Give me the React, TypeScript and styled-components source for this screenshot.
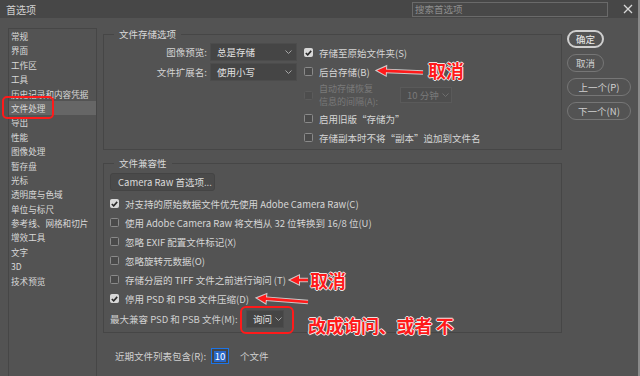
import React from "react";
import styled, { createGlobalStyle } from "styled-components";

const RED = "#ff1a1a";

const GlobalStyle = createGlobalStyle`
  html, body {
    margin: 0;
    padding: 0;
    background: #535353;
  }
  body {
    font-family: "Noto Sans CJK SC", "Noto Sans", sans-serif;
    color: #d6d6d6;
  }
  * {
    box-sizing: border-box;
  }
`;

const Window = styled.div`
  position: relative;
  width: 640px;
  height: 376px;
  overflow: hidden;
  background: #535353;
  border-right: 2px solid #8a8a8a;
`;

const TitleBar = styled.div`
  height: 18px;
  display: flex;
  align-items: center;
  padding: 0 5px 0 6px;
  background: #474747;
`;

const Title = styled.div`
  font-size: 10px;
  color: #d2d2d2;
`;

const Search = styled.div`
  margin-left: auto;
  width: 196px;
  height: 15px;
  border: 1px solid #6a6a6a;
  background: #484848;
  font-size: 9.5px;
  line-height: 13px;
  color: #8e8e8e;
  padding-left: 2px;
`;

const Close = styled.div`
  margin-left: 15px;
  width: 10px;
  height: 10px;
  display: flex;
`;

const Body = styled.div`
  display: flex;
  align-items: flex-start;
  padding: 10px 0 0 8px;
`;

const Sidebar = styled.div`
  width: 89px;
  height: 360px;
  border: 1px solid #464646;
  border-bottom: none;
`;

const NavItem = styled.div<{ $active?: boolean }>`
  height: 14.4px;
  line-height: 14.4px;
  padding-left: 2px;
  font-size: 8.6px;
  white-space: nowrap;
  color: #d8d8d8;
  background: ${(p) => (p.$active ? "#666666" : "transparent")};
`;

const Main = styled.div`
  width: 459px;
  margin-left: 6px;
  display: flex;
  flex-direction: column;
`;

const Group = styled.fieldset<{ $gap?: number }>`
  margin: ${(p) => p.$gap ?? 0}px 0 0 0;
  padding: 0 0 2px 6px;
  border: 1px solid #464646;
  min-width: 0;
`;

const Legend = styled.legend`
  margin-left: 4px;
  padding: 0 5px;
  font-size: 9.5px;
  line-height: 12px;
  color: #d8d8d8;
`;

const StoreContent = styled.div`
  display: flex;
  align-items: flex-start;
  margin-top: 3px;
`;

const SelectGrid = styled.div`
  width: 187px;
  display: grid;
  grid-template-columns: 1fr 87px;
  column-gap: 3px;
  row-gap: 2px;
  align-items: center;
`;

const FieldLabel = styled.div`
  text-align: right;
  font-size: 9.5px;
  color: #d4d4d4;
  white-space: nowrap;
`;

const SelectBox = styled.div<{ $w: number; $h?: number; $disabled?: boolean }>`
  width: ${(p) => p.$w}px;
  height: ${(p) => p.$h ?? 18}px;
  display: flex;
  align-items: center;
  justify-content: space-between;
  gap: 3px;
  padding: 0 4px 0 6px;
  background: ${(p) => (p.$disabled ? "#4e4e4e" : "#454545")};
  border: 1px solid ${(p) => (p.$disabled ? "#5a5a5a" : "#4c4c4c")};
  color: ${(p) => (p.$disabled ? "#7a7a7a" : "#e2e2e2")};
  font-size: 9.5px;
  white-space: nowrap;
`;

const CheckList = styled.div<{ $offset?: number }>`
  display: flex;
  flex-direction: column;
  margin-left: ${(p) => p.$offset ?? 0}px;
`;

const CheckRow = styled.div<{ $h?: number; $disabled?: boolean }>`
  height: ${(p) => p.$h ?? 19}px;
  display: flex;
  align-items: center;
  gap: 6px;
  font-size: 9.5px;
  white-space: nowrap;
  color: ${(p) => (p.$disabled ? "#7a7a7a" : "#d6d6d6")};
`;

const Box = styled.div<{ $checked?: boolean; $disabled?: boolean }>`
  width: 9px;
  height: 9px;
  flex: none;
  border-radius: 1.5px;
  display: flex;
  align-items: center;
  justify-content: center;
  background: ${(p) =>
    p.$checked ? "#d8d8d8" : p.$disabled ? "#4d4d4d" : "#4a4a4a"};
  border: 1px solid
    ${(p) => (p.$checked ? "#d8d8d8" : p.$disabled ? "#5b5b5b" : "#8a8a8a")};
`;

const TwoLine = styled.div`
  width: 75px;
  display: flex;
  flex-direction: column;
  font-size: 9px;
  line-height: 13px;
  margin-top: -1px;
  white-space: nowrap;
`;

const RawButton = styled.div`
  width: 105px;
  height: 18px;
  margin-top: 4px;
  display: flex;
  align-items: center;
  padding-left: 7px;
  background: #4a4a4a;
  border: 1px solid #444444;
  border-radius: 3px;
  font-size: 9.5px;
  color: #dcdcdc;
`;

const CompatList = styled.div`
  display: flex;
  flex-direction: column;
  margin-top: 3px;
`;

const SelectRow = styled.div`
  height: 22px;
  display: flex;
  align-items: center;
  font-size: 9.5px;
  color: #d0d0d0;
`;

const SelectRowLabel = styled.div`
  width: 136px;
  white-space: nowrap;
`;

const RecentRow = styled.div`
  margin: 15px 0 0 12px;
  height: 16px;
  display: flex;
  align-items: center;
  font-size: 9.5px;
  color: #d0d0d0;
`;

const NumInput = styled.div`
  width: 18px;
  height: 16px;
  margin: 0 11px 0 5px;
  display: flex;
  align-items: center;
  justify-content: center;
  border: 1px solid #1c74e6;
  background: #454545;
`;

const Selected = styled.span`
  background: #2a68c8;
  color: #ffffff;
  line-height: 11px;
  padding: 0 1px;
`;

const Buttons = styled.div`
  margin: 2px 0 0 5px;
  display: flex;
  flex-direction: column;
  gap: 6px;
`;

const PillButton = styled.div<{ $w: number; $primary?: boolean }>`
  width: ${(p) => p.$w}px;
  height: 18px;
  display: flex;
  align-items: center;
  justify-content: center;
  border-radius: 9px;
  border: ${(p) => (p.$primary ? "2px solid #cfcfcf" : "1px solid #767676")};
  font-size: 9.5px;
  color: ${(p) => (p.$primary ? "#ececec" : "#d0d0d0")};
  white-space: nowrap;
`;

/* annotation layer drawn over the dialog */
const Overlay = styled.svg`
  position: absolute;
  left: 0;
  top: 0;
  pointer-events: none;
`;

const Note = styled.div<{ $x: number; $y: number }>`
  position: absolute;
  left: ${(p) => p.$x}px;
  top: ${(p) => p.$y}px;
  font-size: 18px;
  line-height: 18px;
  font-weight: 700;
  color: ${RED};
  white-space: pre;
  letter-spacing: -0.3px;
  text-shadow: 1px 0 rgba(255, 255, 255, 0.85), -1px 0 rgba(255, 255, 255, 0.85),
    0 1px rgba(255, 255, 255, 0.85), 0 -1px rgba(255, 255, 255, 0.85);
`;

const Chevron = ({ color = "#a6a6a6" }: { color?: string }) => (
  <svg width="7" height="4" viewBox="0 0 7 4" style={{ flex: "none" }}>
    <polyline points="0.5,0.5 3.5,3.5 6.5,0.5" fill="none" stroke={color} strokeWidth="1" />
  </svg>
);

const Check = () => (
  <svg width="7" height="6" viewBox="0 0 7 6">
    <polyline
      points="0.8,3 2.7,4.9 6.2,0.9"
      fill="none"
      stroke="#2b2b2b"
      strokeWidth="1.6"
    />
  </svg>
);

function Arrow({ x1, y1, x2, y2 }: { x1: number; y1: number; x2: number; y2: number }) {
  const dx = x2 - x1;
  const dy = y2 - y1;
  const len = Math.hypot(dx, dy);
  const ux = dx / len;
  const uy = dy / len;
  const hl = 9;
  const hw = 4.5;
  const bx = x2 - ux * hl;
  const by = y2 - uy * hl;
  const pts = `${x2},${y2} ${bx - uy * hw},${by + ux * hw} ${bx + uy * hw},${by - ux * hw}`;
  return (
    <g>
      <line x1={x1} y1={y1} x2={bx} y2={by} stroke="#fff" strokeOpacity={0.7} strokeWidth={4.5} />
      <polygon points={pts} fill="#fff" fillOpacity={0.7} stroke="#fff" strokeOpacity={0.7} strokeWidth={2} />
      <line x1={x1} y1={y1} x2={bx + ux} y2={by + uy} stroke={RED} strokeWidth={2.6} />
      <polygon points={pts} fill={RED} />
    </g>
  );
}

const navItems = [
  "常规",
  "界面",
  "工作区",
  "工具",
  "历史记录和内容凭据",
  "文件处理",
  "导出",
  "性能",
  "图像处理",
  "暂存盘",
  "光标",
  "透明度与色域",
  "单位与标尺",
  "参考线、网格和切片",
  "增效工具",
  "文字",
  "3D",
  "技术预览",
];

const compatChecks = [
  { label: "对支持的原始数据文件优先使用 Adobe Camera Raw(C)", checked: true },
  { label: "使用 Adobe Camera Raw 将文档从 32 位转换到 16/8 位(U)", checked: false },
  { label: "忽略 EXIF 配置文件标记(X)", checked: false },
  { label: "忽略旋转元数据(O)", checked: false },
  { label: "存储分层的 TIFF 文件之前进行询问 (T)", checked: false },
  { label: "停用 PSD 和 PSB 文件压缩(D)", checked: true },
];

const App: React.FC = () => {
  return (
    <Window>
      <GlobalStyle />
      <TitleBar>
        <Title>首选项</Title>
        <Search>搜索首选项</Search>
        <Close>
          <svg width="10" height="10" viewBox="0 0 10 10">
            <path d="M1 1 L9 9 M9 1 L1 9" stroke="#d8d8d8" strokeWidth="1.3" />
          </svg>
        </Close>
      </TitleBar>

      <Body>
        <Sidebar>
          {navItems.map((item) => (
            <NavItem key={item} $active={item === "文件处理"}>
              {item}
            </NavItem>
          ))}
        </Sidebar>

        <Main>
          <Group>
            <Legend>文件存储选项</Legend>
            <StoreContent>
              <SelectGrid>
                <FieldLabel>图像预览:</FieldLabel>
                <SelectBox $w={87}>
                  总是存储
                  <Chevron />
                </SelectBox>
                <FieldLabel>文件扩展名:</FieldLabel>
                <SelectBox $w={87}>
                  使用小写
                  <Chevron />
                </SelectBox>
              </SelectGrid>

              <CheckList $offset={7}>
                <CheckRow>
                  <Box $checked>
                    <Check />
                  </Box>
                  存储至原始文件夹(S)
                </CheckRow>
                <CheckRow>
                  <Box />
                  后台存储(B)
                </CheckRow>
                <CheckRow $h={28} $disabled>
                  <Box $disabled />
                  <TwoLine>
                    <span>自动存储恢复</span>
                    <span>信息的间隔(A):</span>
                  </TwoLine>
                  <SelectBox $w={52} $h={16} $disabled>
                    10 分钟
                    <Chevron color="#6e6e6e" />
                  </SelectBox>
                </CheckRow>
                <CheckRow>
                  <Box />
                  启用旧版“存储为”
                </CheckRow>
                <CheckRow>
                  <Box />
                  存储副本时不将“副本”追加到文件名
                </CheckRow>
              </CheckList>
            </StoreContent>
          </Group>

          <Group $gap={7}>
            <Legend>文件兼容性</Legend>
            <RawButton>Camera Raw 首选项...</RawButton>
            <CompatList>
              {compatChecks.map((c) => (
                <CheckRow key={c.label}>
                  <Box $checked={c.checked}>{c.checked && <Check />}</Box>
                  {c.label}
                </CheckRow>
              ))}
              <SelectRow>
                <SelectRowLabel>最大兼容 PSD 和 PSB 文件(M):</SelectRowLabel>
                <SelectBox $w={38}>
                  询问
                  <Chevron />
                </SelectBox>
              </SelectRow>
            </CompatList>
          </Group>

          <RecentRow>
            近期文件列表包含(R):
            <NumInput>
              <Selected>10</Selected>
            </NumInput>
            个文件
          </RecentRow>
        </Main>

        <Buttons>
          <PillButton $w={37} $primary>
            确定
          </PillButton>
          <PillButton $w={37}>取消</PillButton>
          <PillButton $w={64}>上一个(P)</PillButton>
          <PillButton $w={64}>下一个(N)</PillButton>
        </Buttons>
      </Body>

      <Overlay width="640" height="376" viewBox="0 0 640 376">
        <rect x="3" y="97" width="50" height="21" rx="4" fill="none" stroke={RED} strokeWidth="2" />
        <rect x="241" y="307" width="52" height="26" rx="5" fill="none" stroke={RED} strokeWidth="2" />
        <Arrow x1={423} y1={72.5} x2={377} y2={70.5} />
        <Arrow x1={308} y1={280} x2={290} y2={280} />
        <Arrow x1={308} y1={302} x2={257} y2={298} />
      </Overlay>
      <Note $x={428} $y={61}>取消</Note>
      <Note $x={310} $y={271}>取消</Note>
      <Note $x={308} $y={316}>改成询问、或者 不</Note>
    </Window>
  );
};

export default App;
